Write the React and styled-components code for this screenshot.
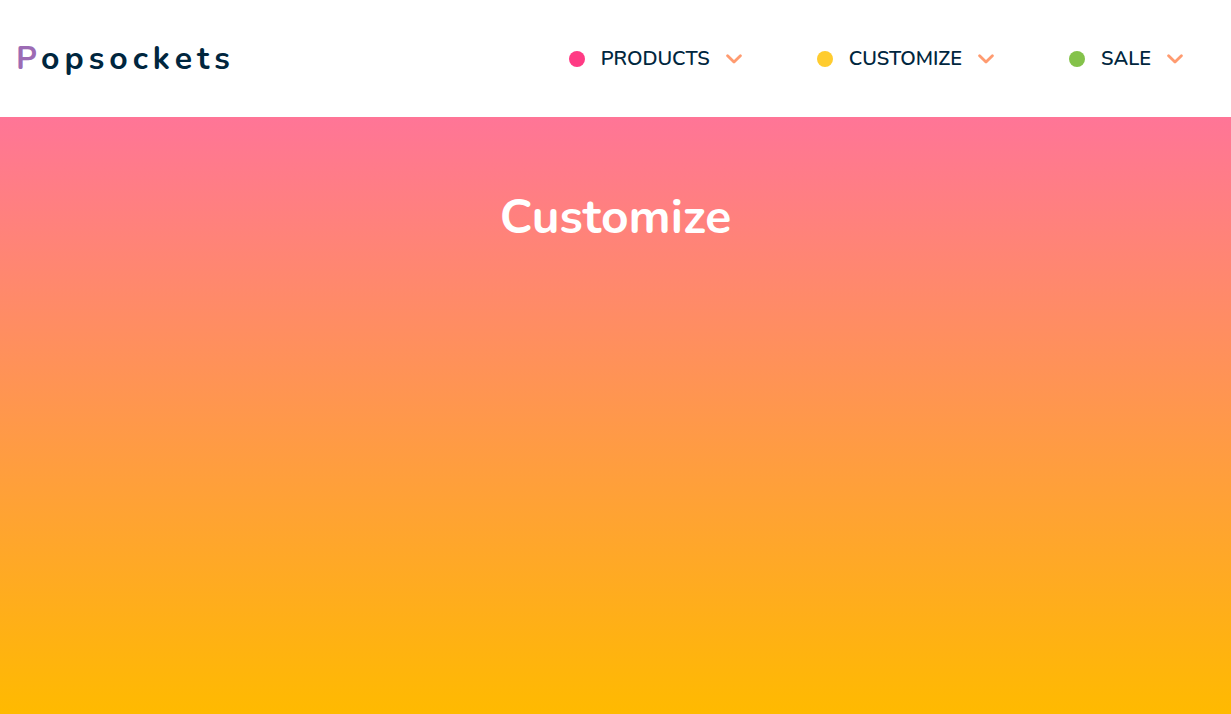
import React from "react";
import styled, { createGlobalStyle } from "styled-components";

const GlobalStyle = createGlobalStyle`
  *, *::before, *::after { box-sizing: border-box; }
  body {
    margin: 0;
    background: #fff;
    color: #00263e;
    font-family: Nunito, Lato, sans-serif;
  }
`;

const Page = styled.div`
  display: flex;
  flex-direction: column;
  min-height: 100vh;
`;

const Header = styled.header`
  display: flex;
  align-items: center;
  justify-content: space-between;
  padding: 33px 48px 32px 16px;
`;

const Logo = styled.a`
  color: inherit;
  font-size: 32px;
  font-weight: 700;
  line-height: 52px;
  letter-spacing: 5px;
  text-decoration: none;
`;

const Initial = styled.span`
  color: #9c6bb4;
`;

const Nav = styled.nav`
  display: flex;
  gap: 75px;
`;

const NavButton = styled.button`
  display: flex;
  align-items: center;
  gap: 16px;
  padding: 0;
  border: 0;
  background: none;
  color: inherit;
  font: inherit;
  font-size: 20px;
  font-weight: 600;
  line-height: 32px;
  text-transform: uppercase;
  cursor: pointer;
`;

const Dot = styled.span`
  width: 16px;
  height: 16px;
  border-radius: 50%;
  background: ${(p) => p.$color};
`;

const ChevronIcon = styled.svg`
  display: block;
  width: 16px;
  height: 10px;
  fill: none;
  stroke: #ff9b70;
  stroke-width: 2.8;
  stroke-linecap: round;
  stroke-linejoin: round;
`;

const Hero = styled.main`
  flex: 1;
  padding: 64px 16px;
  background: linear-gradient(180deg, #ff7597, #ffba00);
`;

const Title = styled.h1`
  margin: 0;
  color: #fff;
  font-size: 48px;
  font-weight: 700;
  line-height: 72px;
  text-align: center;
`;

const items = [
  { label: "Products", color: "#ff3b84" },
  { label: "Customize", color: "#ffcc2f" },
  { label: "Sale", color: "#84c24a" },
];

export default function App() {
  return (
    <Page>
      <GlobalStyle />
      <Header>
        <Logo href="#">
          <Initial>P</Initial>opsockets
        </Logo>
        <Nav>
          {items.map((item) => (
            <NavButton key={item.label} type="button">
              <Dot $color={item.color} />
              {item.label}
              <ChevronIcon viewBox="0 0 16 10" aria-hidden="true">
                <path d="M1.6 1.7 8 8.1l6.4-6.4" />
              </ChevronIcon>
            </NavButton>
          ))}
        </Nav>
      </Header>
      <Hero>
        <Title>Customize</Title>
      </Hero>
    </Page>
  );
}
